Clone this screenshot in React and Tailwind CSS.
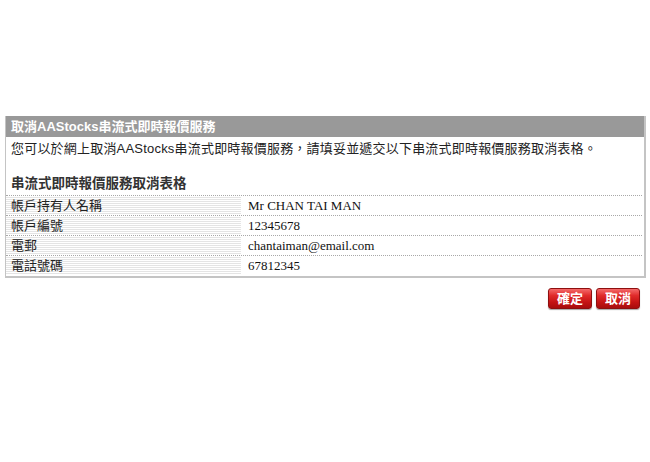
const rows = [
  ['帳戶持有人名稱', 'Mr CHAN TAI MAN'],
  ['帳戶編號', '12345678'],
  ['電郵', 'chantaiman@email.com'],
  ['電話號碼', '67812345'],
]

const cjk = "font-['Liberation_Sans','Noto_Sans_CJK_TC',sans-serif]"

function RedButton({ children }) {
  return (
    <button
      className={`h-[21px] w-[44px] rounded-[3px] border border-[#8e0f0f] bg-[linear-gradient(#f46a6a_0,#e02a2a_35%,#c41414_70%,#a80d0d_100%)] text-[13px] leading-none font-bold text-white shadow-[0_1px_1px_rgba(0,0,0,0.35)] ${cjk}`}
    >
      {children}
    </button>
  )
}

export default function App() {
  return (
    <div className={`w-[650px] h-[462px] bg-white pt-[116px] pl-[5px] text-[#222] ${cjk}`}>
      <div className="w-[641px] border-l border-r-2 border-b-2 border-[#c4c4c4] pb-[1px]">
        <div className="h-[21px] bg-[#999999] pl-[5px] flex items-center text-[13px] font-bold text-white">
          取消AAStocks串流式即時報價服務
        </div>
        <p className="pl-[5px] pt-[3px] text-[13px] leading-[18px] tracking-[0.2px]">
          您可以於網上取消AAStocks串流式即時報價服務，請填妥並遞交以下串流式即時報價服務取消表格。
        </p>
        <h2 className="pl-[5px] pt-[17px] text-[13.5px] leading-[18px] font-bold text-[#333]">
          串流式即時報價服務取消表格
        </h2>
        <div className="mt-[2px] pr-[2px]">
          {rows.map(([label, value]) => (
            <div key={label} className="flex h-[20px] border-t border-dotted border-[#a8a8a8]">
              <div className="w-[235px] pl-[5px] flex items-center text-[13px] bg-[repeating-linear-gradient(#ffffff_0,#ffffff_1px,#e4e4e4_1px,#e4e4e4_2px)]">
                {label}
              </div>
              <div className="pl-[7px] flex items-center text-[13px] font-['Liberation_Serif',serif] text-[#111]">
                {value}
              </div>
            </div>
          ))}
        </div>
      </div>
      <div className="w-[635px] flex justify-end gap-[4px] pt-[10px]">
        <RedButton>確定</RedButton>
        <RedButton>取消</RedButton>
      </div>
    </div>
  )
}
